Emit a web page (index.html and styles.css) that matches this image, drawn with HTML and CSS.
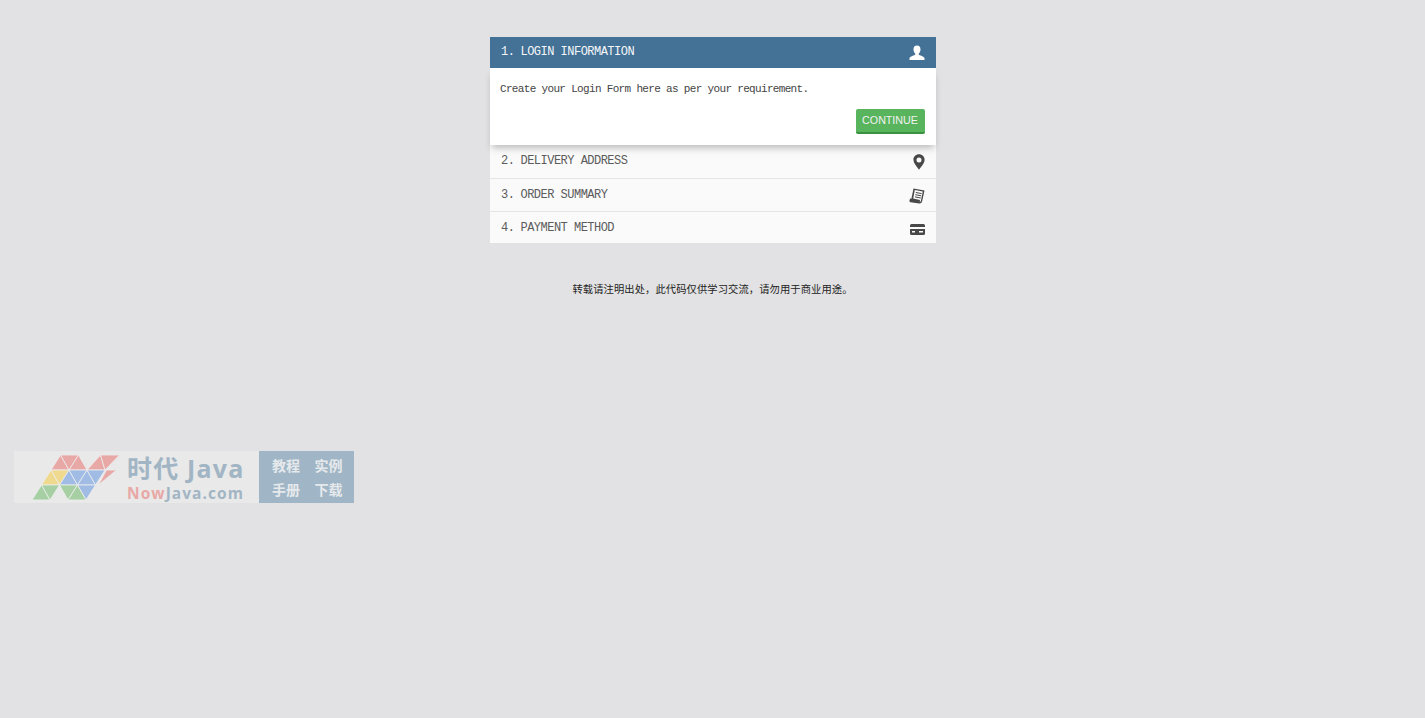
FILE: index.html
```html
<!DOCTYPE html>
<html lang="en">
<head>
    <meta charset="UTF-8" />
    <title>Checkout</title>
    <link rel="stylesheet" href="styles.css">
</head>
<body>
    <div class="checkout">
        <div class="step step-active">
            <span class="step-num">1.</span>
            <span class="step-title">LOGIN INFORMATION</span>
            <svg class="icon icon-user" viewBox="0 0 16 16"><path fill="#fff" d="M8 .5c2.300 0 3.500 1.700 3.500 3.900 0 1.700-.7 3.200-1.600 4.100-.3.4-.3 1.100.3 1.400 1.800.9 4.600 1.400 5.300 3V15H.5v-2.100c.7-1.600 3.500-2.100 5.300-3 .6-.3.6-1 .3-1.400C5.200 7.600 4.500 6.100 4.500 4.400 4.500 2.200 5.700.5 8 .5z"/></svg>
        </div>
        <div class="step-body">
            <p class="step-text">Create your Login Form here as per your requirement.</p>
            <div class="step-actions">
                <button class="btn-continue">CONTINUE</button>
            </div>
        </div>
        <div class="step">
            <span class="step-num">2.</span>
            <span class="step-title">DELIVERY ADDRESS</span>
            <svg class="icon icon-pin" viewBox="0 0 12 16"><path fill="#484848" fill-rule="evenodd" d="M6 .3C2.800.3.400 2.700.400 5.800c0 3.400 3.200 6.700 5.600 9.900 2.400-3.200 5.600-6.500 5.600-9.900C11.600 2.700 9.200.3 6 .3zM6 3.400a2.500 2.500 0 1 1 0 5 2.500 2.500 0 0 1 0-5z"/></svg>
        </div>
        <div class="step">
            <span class="step-num">3.</span>
            <span class="step-title">ORDER SUMMARY</span>
            <svg class="icon icon-receipt" viewBox="0 0 16 16"><path fill="#484848" fill-rule="evenodd" d="M4.500.5l11 2-2.300 10.500c-.3 1.500-1.300 2.600-2.800 2.500L1.500 14.300c-.9-.2-1.300-.9-1-1.700l.6-2.100 1.300.2z M5.800 2L4.200 10.600l6.800 1.300-.2 1.300c-.1.400 0 .6.200.6.500 0 .7-.5.9-1.100l1.900-9.100z"/><path stroke="#484848" stroke-width="1" d="M6.800 4.500l5.800 1.100M6.400 6.700l5.800 1.100M6 8.900l5.800 1.100"/></svg>
        </div>
        <div class="step">
            <span class="step-num">4.</span>
            <span class="step-title">PAYMENT METHOD</span>
            <svg class="icon icon-card" viewBox="0 0 15 11"><path fill="#484848" fill-rule="evenodd" d="M1.500 0h12A1.500 1.500 0 0 1 15 1.500V3H0V1.500A1.500 1.500 0 0 1 1.500 0zM0 5h15v4.500A1.500 1.500 0 0 1 13.500 11h-12A1.500 1.500 0 0 1 0 9.500zM2 7v1.500h3V7zM9 7v1.500h4V7z"/></svg>
        </div>
    </div>
    <p class="notice">转载请注明出处，此代码仅供学习交流，请勿用于商业用途。</p>

    <div class="watermark">
        <div class="wm-left">
            <svg class="wm-logo" viewBox="0 0 90 46">
                <g class="tri-pink">
                    <polygon points="30,0 20.500,15 38.500,15"/>
                    <polygon points="30,0 48,0 38.500,15"/>
                    <polygon points="48,0 38.500,15 56.500,15"/>
                    <polygon points="70,0 56.500,15 74.500,15"/>
                    <polygon points="70,0 89,0 74.500,15"/>
                    <polygon points="76,15 86,15 68,30"/>
                </g>
                <g class="tri-yellow">
                    <polygon points="20.500,15 11,30 29,30"/>
                    <polygon points="20.500,15 38.500,15 29,30"/>
                </g>
                <g class="tri-blue">
                    <polygon points="38.500,15 29,30 47,30"/>
                    <polygon points="38.500,15 56.500,15 47,30"/>
                    <polygon points="56.500,15 47,30 65,30"/>
                    <polygon points="56.500,15 74.500,15 65,30"/>
                    <polygon points="47,30 65,30 55.500,45"/>
                </g>
                <g class="tri-green">
                    <polygon points="11,30 1.500,45 19.500,45"/>
                    <polygon points="11,30 29,30 19.500,45"/>
                    <polygon points="29,30 47,30 37.500,45"/>
                    <polygon points="47,30 37.500,45 55.500,45"/>
                </g>
            </svg>
            <div class="wm-brand">
                <div class="wm-name">时代 Java</div>
                <div class="wm-site"><span class="wm-now">Now</span>Java.com</div>
            </div>
        </div>
        <div class="wm-right">
            <span>教程</span><span>实例</span>
            <span>手册</span><span>下载</span>
        </div>
    </div>
</body>
</html>
```
FILE: styles.css
```css
body {
    margin: 0;
    height: 718px;
    overflow: hidden;
    background: #e2e2e4;
    font-family: "Liberation Mono", "Noto Sans CJK SC", monospace;
}

.checkout {
    width: 446px;
    margin: 37px auto 0;
}

.step {
    height: 33px;
    box-sizing: border-box;
    display: flex;
    align-items: flex-start;
    padding: 7px 11px 0 11.5px;
    background: #fafafa;
    border-bottom: 1px solid #e4e4e4;
    color: #5c5c5c;
    font-size: 12px;
    line-height: 18px;
    letter-spacing: -0.52px;
}

.step-body + .step {
    height: 34px;
}

.step:last-child {
    height: 31px;
    border-bottom: none;
}

.step-active {
    height: 31px;
    padding-top: 6px;
    background: #447196;
    border-bottom: none;
    color: #f4f7f9;
}

.step-num {
    width: 19.5px;
}

.step-title {
    flex: 1;
}

.icon {
    display: block;
    flex: none;
}

.icon-user {
    width: 16px;
    height: 16px;
    margin-top: 2px;
}

.icon-pin {
    width: 12px;
    height: 16px;
    margin-top: 2px;
}

.icon-receipt {
    width: 16px;
    height: 16px;
    margin-top: 2px;
}

.icon-card {
    width: 15px;
    height: 11px;
    margin-top: 5px;
}

.step-body {
    height: 77px;
    box-sizing: border-box;
    padding: 13px 11px 0 10.5px;
    background: #fff;
    box-shadow: 0 5px 7px -2px rgba(0, 0, 0, 0.25);
    position: relative;
}

.step-text {
    margin: 0;
    font-size: 11px;
    line-height: 16px;
    letter-spacing: -0.67px;
    color: #444;
}

.step-actions {
    display: flex;
    justify-content: flex-end;
    margin-top: 12px;
}

.btn-continue {
    width: 69px;
    height: 25px;
    padding: 0 0 2px;
    border: none;
    border-bottom: 2px solid #3c9140;
    border-radius: 2px;
    background: #59b55d;
    color: #f2f2f2;
    font-family: "Liberation Sans", Arial, sans-serif;
    font-size: 10.700px;
}

.notice {
    margin: 38px 0 0;
    text-align: center;
    font-family: "Noto Sans CJK SC", sans-serif;
    font-size: 10.300px;
    letter-spacing: 0.08px;
    line-height: 16px;
    color: #222;
}

.watermark {
    position: absolute;
    left: 14px;
    top: 451px;
    width: 340px;
    height: 52px;
    display: flex;
}

.wm-left {
    width: 245px;
    background: #e9e9e9;
    display: flex;
}

.wm-logo {
    width: 91px;
    height: 46px;
    margin: 4px 0 0 15.500px;
    flex: none;
}

.wm-logo polygon {
    stroke: #eeeeee;
    stroke-width: 0.8;
}

.tri-pink {
    fill: #e8a8a6;
}

.tri-yellow {
    fill: #eed98e;
}

.tri-blue {
    fill: #a0bce4;
}

.tri-green {
    fill: #a6d0a4;
}

.wm-brand {
    margin-left: 6.500px;
    font-family: "Open Sans", "Noto Sans CJK SC", sans-serif;
    font-weight: 700;
}

.wm-name {
    font-size: 25px;
    line-height: 32px;
    margin-top: 1px;
    color: #a2b5c4;
    letter-spacing: 1.200px;
    white-space: nowrap;
}

.wm-site {
    font-size: 15.500px;
    line-height: 17px;
    margin-top: 1px;
    color: #a2b5c4;
    letter-spacing: 1.050px;
}

.wm-now {
    color: #e8a8a6;
}

.wm-right {
    flex: 1;
    background: #a0b6c6;
    display: grid;
    grid-template-columns: 54px 1fr;
    align-items: center;
    justify-items: center;
    padding: 2px 10px 2px 0;
    color: #e6e9ec;
    font-family: "Noto Sans CJK SC", sans-serif;
    font-weight: 700;
    font-size: 14px;
}
```
